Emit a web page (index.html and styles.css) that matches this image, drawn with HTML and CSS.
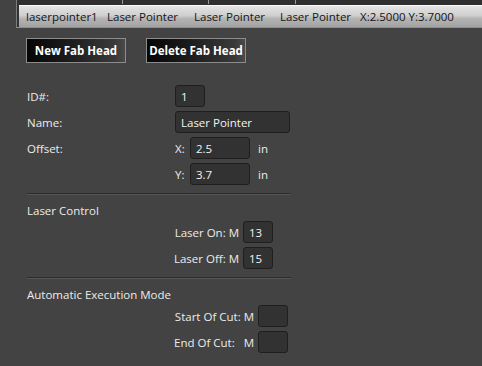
FILE: index.html
```html
<!DOCTYPE html>
<html lang="en">
<head>
    <meta charset="UTF-8">
    <title>Fab Head</title>
    <link rel="stylesheet" href="styles.css">
</head>
<body>
    <div class="grid-wrap">
        <div class="col-strip">
            <span class="col-mark m1"></span>
            <span class="col-mark m2"></span>
            <span class="col-mark m3"></span>
        </div>
        <div class="grid-row">
            <span class="cell c1">laserpointer1</span>
            <span class="cell c2">Laser Pointer</span>
            <span class="cell c3">Laser Pointer</span>
            <span class="cell c4">Laser Pointer</span>
            <span class="cell">X:2.5000 Y:3.7000</span>
        </div>
    </div>

    <div class="toolbar">
        <button class="fab-btn">New Fab Head</button>
        <button class="fab-btn">Delete Fab Head</button>
    </div>

    <div class="form">
        <div class="field">
            <span class="label">ID#:</span>
            <input class="box box-s" value="1">
        </div>
        <div class="field">
            <span class="label">Name:</span>
            <input class="box box-l" value="Laser Pointer">
        </div>
        <div class="field">
            <span class="label">Offset:</span>
            <span class="axis">X:</span>
            <input class="box box-m" value="2.5">
            <span class="unit">in</span>
        </div>
        <div class="field">
            <span class="label"></span>
            <span class="axis">Y:</span>
            <input class="box box-m" value="3.7">
            <span class="unit">in</span>
        </div>

        <div class="sep"></div>

        <div class="section-title">Laser Control</div>
        <div class="mrow laser">
            <span>Laser On: M</span>
            <input class="box box-s" value="13">
        </div>
        <div class="mrow laser">
            <span>Laser Off: M</span>
            <input class="box box-s" value="15">
        </div>

        <div class="sep"></div>

        <div class="section-title">Automatic Execution Mode</div>
        <div class="mrow cut">
            <span>Start Of Cut: M</span>
            <input class="box box-s" value="">
        </div>
        <div class="mrow cut">
            <span>End Of Cut:&nbsp;&nbsp; M</span>
            <input class="box box-s" value="">
        </div>
    </div>
</body>
</html>
```

FILE: styles.css
```css
body {
    margin: 0;
    background: #434343;
    color: #ececec;
    font-family: 'Open Sans', 'Noto Sans', sans-serif;
    font-size: 11.5px;
}

/* data grid header row */
.grid-wrap {
    margin-left: 16px;
    border-left: 1px solid #7c7c7c;
    border-bottom: 1px solid #8e8e8e;
    background: #333;
    padding-left: 2px;
}

.col-strip {
    position: relative;
    height: 5px;
    background: #2f2f2f;
}

.col-mark {
    position: absolute;
    top: 0;
    width: 1px;
    height: 4px;
    background: #9a9a9a;
}

.m1 { left: 103px; }
.m2 { left: 189px; }
.m3 { left: 276px; }

.grid-row {
    display: flex;
    align-items: center;
    height: 21px;
    border-top: 1px solid #fafafa;
    background: linear-gradient(#e4e4e4, #cfcfcf 45%, #b4b4b4 60%, #a2a2a2);
    color: #151515;
    padding-left: 7px;
    font-size: 11.5px;
}

.cell { white-space: nowrap; }
.c1 { width: 81px; }
.c2 { width: 87px; }
.c3 { width: 86px; }
.c4 { width: 80px; }

/* buttons */
.toolbar {
    display: flex;
    gap: 20px;
    padding: 10px 0 0 26px;
}

.fab-btn {
    width: 100px;
    height: 25px;
    padding: 0;
    border: 1px solid #8c8c8c;
    background: linear-gradient(90deg, #060606, #1a1a1a 40%, #3a3a3a 90%, #4a4a4a);
    color: #fff;
    font-family: 'Open Sans', sans-serif;
    font-weight: bold;
    font-size: 11.5px;
}

/* form */
.form {
    padding: 22px 0 0 27px;
    width: 264px;
}

.field {
    display: flex;
    align-items: center;
    height: 22px;
    margin-bottom: 4px;
}

.label {
    width: 148px;
}

.axis {
    width: 15px;
}

.unit {
    margin-left: 8px;
}

.box {
    box-sizing: border-box;
    height: 22px;
    padding: 0 5px;
    border: 1px solid #1f1f1f;
    border-radius: 3px;
    background: #323232;
    color: #f2f2f2;
    font-family: 'Open Sans', sans-serif;
    font-size: 11.5px;
    outline: none;
}

.box-s { width: 30px; }
.box-l { width: 115px; }
.box-m { width: 60px; }

.sep {
    height: 1px;
    margin: 8px 0 6px;
    border-top: 1px solid #2c2c2c;
    background: #555;
}

.section-title {
    height: 20px;
    line-height: 20px;
}

.mrow {
    display: flex;
    justify-content: flex-end;
    align-items: center;
    gap: 4px;
    margin-bottom: 4px;
}

.laser { width: 246px; }
.cut { width: 261px; }
```
